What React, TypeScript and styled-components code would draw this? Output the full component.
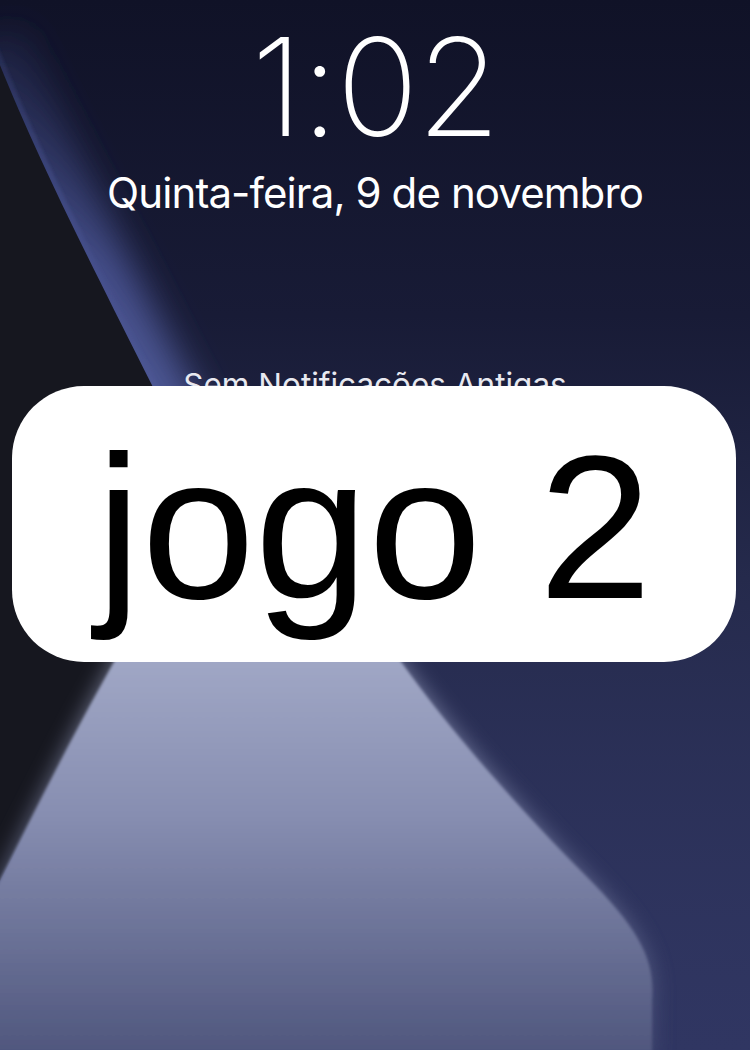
import React from "react";
import styled, { createGlobalStyle } from "styled-components";

const GlobalStyle = createGlobalStyle`
  html, body {
    margin: 0;
    padding: 0;
    background: #11132a;
  }
  body {
    font-family: "Inter", "Liberation Sans", sans-serif;
  }
`;

const Screen = styled.div`
  position: relative;
  width: 750px;
  height: 1050px;
  overflow: hidden;
  background: #1a1d3a;
`;

const WallpaperSvg = styled.svg`
  position: absolute;
  inset: 0;
  width: 750px;
  height: 1050px;
  display: block;
`;

const Content = styled.main`
  position: relative;
  display: flex;
  flex-direction: column;
  align-items: center;
  padding-top: 19px;
  color: #ffffff;
`;

const Clock = styled.div`
  font-family: "Inter", "Roboto", sans-serif;
  font-weight: 200;
  font-size: 136px;
  line-height: 1;
  letter-spacing: -2px;
`;

const DateLine = styled.div`
  margin-top: 17px;
  font-family: "Inter", "Roboto", sans-serif;
  font-weight: 400;
  font-size: 42px;
  line-height: 1;
  letter-spacing: -0.9px;
`;

const NotifHint = styled.div`
  margin-top: 155px;
  font-family: "Inter", "Roboto", sans-serif;
  font-weight: 400;
  font-size: 31.5px;
  line-height: 1;
  color: #e8e9f0;
`;

const Banner = styled.div`
  position: relative;
  z-index: 1;
  align-self: stretch;
  margin: -15px 14px 0 12px;
  height: 276px;
  box-sizing: border-box;
  padding-top: 39px;
  background: #ffffff;
  border-radius: 72px;
  display: flex;
  justify-content: center;
`;

const BannerText = styled.span`
  font-family: "Liberation Sans", Arial, sans-serif;
  font-size: 204px;
  line-height: 1;
  color: #000000;
`;

const Wallpaper = () => (
  <WallpaperSvg viewBox="0 0 750 1050" preserveAspectRatio="none" aria-hidden>
    <defs>
      <linearGradient id="bg" x1="0" y1="0" x2="0" y2="1050" gradientUnits="userSpaceOnUse">
        <stop offset="0" stopColor="#101227" />
        <stop offset="0.3" stopColor="#181b36" />
        <stop offset="0.55" stopColor="#252a4c" />
        <stop offset="1" stopColor="#30366282" />
      </linearGradient>
      <linearGradient id="glow" x1="0" y1="40" x2="0" y2="540" gradientUnits="userSpaceOnUse">
        <stop offset="0" stopColor="#353e72" stopOpacity="0.3" />
        <stop offset="0.45" stopColor="#444e8a" />
        <stop offset="1" stopColor="#56609f" />
      </linearGradient>
      <linearGradient id="light" x1="0" y1="620" x2="0" y2="1050" gradientUnits="userSpaceOnUse">
        <stop offset="0" stopColor="#a6adca" />
        <stop offset="0.45" stopColor="#878eb1" />
        <stop offset="1" stopColor="#50577e" />
      </linearGradient>
      <filter id="soft" x="-50%" y="-50%" width="200%" height="200%">
        <feGaussianBlur stdDeviation="18" />
      </filter>
      <filter id="softer" x="-50%" y="-50%" width="200%" height="200%">
        <feGaussianBlur stdDeviation="11" />
      </filter>
      <filter id="edge" x="-10%" y="-10%" width="120%" height="120%">
        <feGaussianBlur stdDeviation="1.5" />
      </filter>
    </defs>
    <rect x="0" y="0" width="750" height="1050" fill="#303662" />
    <rect x="0" y="0" width="750" height="1050" fill="url(#bg)" />
    <path
      d="M -10,40 C 40,170 110,300 230,540"
      fill="none"
      stroke="url(#glow)"
      strokeWidth="70"
      filter="url(#soft)"
    />
    <path
      d="M -10,40 C 40,170 110,300 230,540"
      fill="none"
      stroke="url(#glow)"
      strokeWidth="10"
      filter="url(#edge)"
    />
    <path
      d="M -10,40 C 40,170 110,300 230,540 L 150,600 L -10,900 Z"
      fill="#16171f"
    />
    <path
      d="M 150,600 C 90,700 40,800 -10,900 L -10,1060 L 652,1060 L 652,1000 C 655,960 640,930 585,875 C 520,810 420,700 360,600 Z"
      fill="url(#light)"
      opacity="0.7"
      filter="url(#softer)"
    />
    <path
      d="M 150,600 C 90,700 40,800 -10,900 L -10,1060 L 652,1060 L 652,1000 C 655,960 640,930 585,875 C 520,810 420,700 360,600 Z"
      fill="url(#light)"
      filter="url(#edge)"
    />
  </WallpaperSvg>
);

export default function App() {
  return (
    <>
      <GlobalStyle />
      <Screen>
        <Wallpaper />
        <Content>
          <Clock>1:02</Clock>
          <DateLine>Quinta-feira, 9 de novembro</DateLine>
          <NotifHint>Sem Notificações Antigas</NotifHint>
          <Banner>
            <BannerText>jogo 2</BannerText>
          </Banner>
        </Content>
      </Screen>
    </>
  );
}
